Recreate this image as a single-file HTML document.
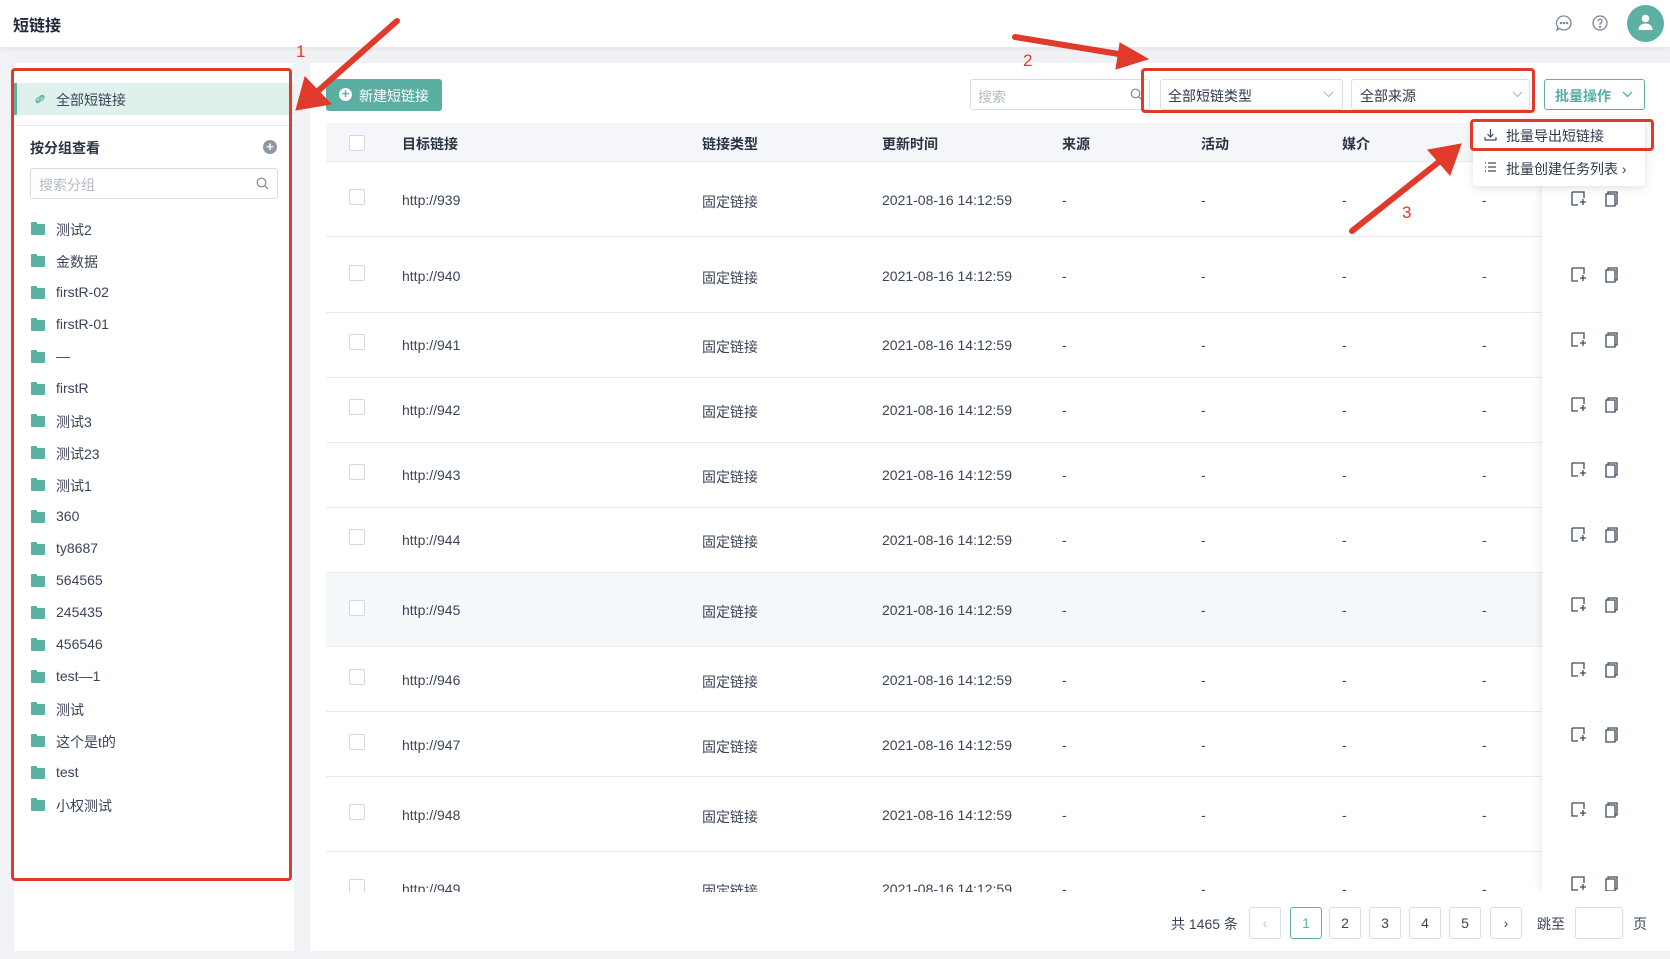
<!DOCTYPE html>
<html><head><meta charset="utf-8">
<style>
*{box-sizing:border-box;margin:0;padding:0}
body{width:1670px;height:959px;background:#f0f2f5;font-family:"Liberation Sans","Noto Sans CJK SC",sans-serif;color:#2e3a4d;font-size:14px;position:relative;overflow:hidden}
.a{position:absolute}
.hdr{left:0;top:0;width:1670px;height:47px;background:#fff;box-shadow:0 2px 6px rgba(0,0,0,.06)}
.fold{position:absolute;left:31px;width:14px;height:11px;background:#5fb0a4;border-radius:1px}
.fold:before{content:"";position:absolute;left:0;top:-2px;width:6px;height:3px;background:#5fb0a4;border-radius:1px 1px 0 0}
.fl{position:absolute;left:56px;font-size:14px;color:#3a4557}
.th{position:absolute;top:134px;font-weight:bold;font-size:14px;color:#2b3444}
.cb{position:absolute;left:349px;width:16px;height:16px;border:1px solid #d3d8df;border-radius:2px;background:#fff}
.cell{position:absolute;font-size:14px;color:#3a4557}
.sep{position:absolute;left:326px;width:1320px;height:1px;background:#e8ebf0}
.pg{position:absolute;top:907px;width:32px;height:32px;border:1px solid #d8dce3;border-radius:3px;text-align:center;line-height:30px;font-size:14px;color:#3a4557;background:#fff}
.red{position:absolute;border:3px solid #e03a2a;border-radius:4px}
</style></head><body>
<div class="a hdr"></div>
<div class="a" style="left:13px;top:12px;font-size:16px;font-weight:bold;color:#1f2838">短链接</div>
<svg class="a" style="left:1555px;top:14px" width="18" height="18" viewBox="0 0 18 18" fill="none" stroke="#7d8796" stroke-width="1.3"><path d="M9 2a7 7 0 1 1-4.5 12.4L2 16l.8-3A7 7 0 0 1 9 2z"/><circle cx="6" cy="9" r=".6" fill="#7d8796"/><circle cx="9" cy="9" r=".6" fill="#7d8796"/><circle cx="12" cy="9" r=".6" fill="#7d8796"/></svg>
<svg class="a" style="left:1591px;top:14px" width="18" height="18" viewBox="0 0 18 18" fill="none" stroke="#7d8796" stroke-width="1.3"><circle cx="9" cy="9" r="7"/><path d="M7 7.2a2 2 0 1 1 2.5 1.9c-.4.2-.5.5-.5 1v.6"/><circle cx="9" cy="12.8" r=".5" fill="#7d8796"/></svg>
<div class="a" style="left:1627px;top:5px;width:37px;height:37px;border-radius:50%;background:#5fb0a4"></div>
<svg class="a" style="left:1637px;top:13px" width="17" height="18" viewBox="0 0 17 18" fill="#fff"><circle cx="8.5" cy="5.5" r="3.8"/><path d="M1.5 17c0-4 3-6.5 7-6.5s7 2.5 7 6.5z"/></svg>

<!-- left panel -->
<div class="a" style="left:14px;top:63px;width:280px;height:888px;background:#fff"></div>
<div class="a" style="left:14px;top:83px;width:280px;height:32px;background:#e0f1ed;border-left:3px solid #5fb0a4"></div>
<svg class="a" style="left:34px;top:93px" width="12" height="12" viewBox="0 0 12 12" fill="none" stroke="#5fb0a4" stroke-width="1.2"><path d="M3 9l6-6M4.5 4.5l-2 2a1.8 1.8 0 0 0 2.6 2.6l2-2M7.5 7.5l2-2a1.8 1.8 0 0 0-2.6-2.6l-2 2"/></svg>
<div class="a" style="left:56px;top:90px;font-size:14px;color:#3a4557">全部短链接</div>
<div class="a" style="left:14px;top:125px;width:280px;height:1px;background:#e8ebf0"></div>
<div class="a" style="left:30px;top:138px;font-size:14px;font-weight:bold;color:#2b3444">按分组查看</div>
<div class="a" style="left:263px;top:140px;width:14px;height:14px;border-radius:50%;background:#8e97a4;color:#fff;font-size:13px;line-height:13px;text-align:center;font-weight:bold">+</div>
<div class="a" style="left:30px;top:168px;width:248px;height:31px;border:1px solid #d8dce3;border-radius:3px"></div>
<div class="a" style="left:39px;top:175px;font-size:14px;color:#b4bac4">搜索分组</div>
<svg class="a" style="left:256px;top:177px" width="13" height="13" viewBox="0 0 13 13" fill="none" stroke="#7d8796" stroke-width="1.2"><circle cx="5.5" cy="5.5" r="4.3"/><path d="M8.6 8.6l3.4 3.4"/></svg>

<div class="fold" style="top:224px"></div><div class="fl" style="top:220px">测试2</div>
<div class="fold" style="top:256px"></div><div class="fl" style="top:252px">金数据</div>
<div class="fold" style="top:288px"></div><div class="fl" style="top:284px">firstR-02</div>
<div class="fold" style="top:320px"></div><div class="fl" style="top:316px">firstR-01</div>
<div class="fold" style="top:352px"></div><div class="fl" style="top:348px">—</div>
<div class="fold" style="top:384px"></div><div class="fl" style="top:380px">firstR</div>
<div class="fold" style="top:416px"></div><div class="fl" style="top:412px">测试3</div>
<div class="fold" style="top:448px"></div><div class="fl" style="top:444px">测试23</div>
<div class="fold" style="top:480px"></div><div class="fl" style="top:476px">测试1</div>
<div class="fold" style="top:512px"></div><div class="fl" style="top:508px">360</div>
<div class="fold" style="top:544px"></div><div class="fl" style="top:540px">ty8687</div>
<div class="fold" style="top:576px"></div><div class="fl" style="top:572px">564565</div>
<div class="fold" style="top:608px"></div><div class="fl" style="top:604px">245435</div>
<div class="fold" style="top:640px"></div><div class="fl" style="top:636px">456546</div>
<div class="fold" style="top:672px"></div><div class="fl" style="top:668px">test—1</div>
<div class="fold" style="top:704px"></div><div class="fl" style="top:700px">测试</div>
<div class="fold" style="top:736px"></div><div class="fl" style="top:732px">这个是t的</div>
<div class="fold" style="top:768px"></div><div class="fl" style="top:764px">test</div>
<div class="fold" style="top:800px"></div><div class="fl" style="top:796px">小权测试</div>

<!-- main panel -->
<div class="a" style="left:310px;top:63px;width:1360px;height:888px;background:#fff"></div>
<div class="a" style="left:326px;top:79px;width:116px;height:32px;background:#5aafa2;border-radius:3px"></div>
<div class="a" style="left:339px;top:88px;width:13px;height:13px;border-radius:50%;background:#fff;color:#5aafa2;font-size:13px;line-height:12px;text-align:center;font-weight:bold">+</div>
<div class="a" style="left:359px;top:86px;font-size:14px;color:#fff">新建短链接</div>

<div class="a" style="left:970px;top:79px;width:180px;height:31px;border:1px solid #d8dce3;border-radius:3px"></div>
<div class="a" style="left:978px;top:87px;font-size:14px;color:#b4bac4">搜索</div>
<svg class="a" style="left:1130px;top:88px" width="13" height="13" viewBox="0 0 13 13" fill="none" stroke="#7d8796" stroke-width="1.2"><circle cx="5.5" cy="5.5" r="4.3"/><path d="M8.6 8.6l3.4 3.4"/></svg>
<div class="a" style="left:1160px;top:79px;width:183px;height:31px;border:1px solid #d8dce3;border-radius:3px"></div>
<div class="a" style="left:1168px;top:86px;font-size:14px;color:#2e3a4d">全部短链类型</div>
<svg class="a" style="left:1323px;top:91px" width="11" height="7" viewBox="0 0 11 7" fill="none" stroke="#aab1bc"><path d="M1 1l4.5 4.5L10 1"/></svg>
<div class="a" style="left:1351px;top:79px;width:179px;height:31px;border:1px solid #d8dce3;border-radius:3px"></div>
<div class="a" style="left:1360px;top:86px;font-size:14px;color:#2e3a4d">全部来源</div>
<svg class="a" style="left:1512px;top:91px" width="11" height="7" viewBox="0 0 11 7" fill="none" stroke="#aab1bc"><path d="M1 1l4.5 4.5L10 1"/></svg>
<div class="a" style="left:1544px;top:79px;width:101px;height:31px;border:1px solid #5fb0a4;border-radius:3px"></div>
<div class="a" style="left:1555px;top:86px;font-size:14px;color:#5aafa2;font-weight:bold">批量操作</div>
<svg class="a" style="left:1622px;top:91px" width="11" height="7" viewBox="0 0 11 7" fill="none" stroke="#5aafa2" stroke-width="1.3"><path d="M1 1l4.5 4.5L10 1"/></svg>

<!-- table header -->
<div class="a" style="left:326px;top:123px;width:1320px;height:39px;background:#f4f6f9;border-bottom:1px solid #e8ebf0"></div>
<div class="cb" style="top:135px"></div>
<div class="th" style="left:402px">目标链接</div>
<div class="th" style="left:702px">链接类型</div>
<div class="th" style="left:882px">更新时间</div>
<div class="th" style="left:1062px">来源</div>
<div class="th" style="left:1201px">活动</div>
<div class="th" style="left:1342px">媒介</div>

<!-- rows -->
<div class="a" style="left:326px;top:573px;width:1320px;height:73px;background:#f5f8fb"></div>
<div class="sep" style="top:236px"></div><div class="sep" style="top:312px"></div><div class="sep" style="top:377px"></div><div class="sep" style="top:442px"></div><div class="sep" style="top:507px"></div><div class="sep" style="top:572px"></div><div class="sep" style="top:646px"></div><div class="sep" style="top:711px"></div><div class="sep" style="top:776px"></div><div class="sep" style="top:851px"></div>

<div style="position:absolute;left:0;top:0;width:1670px;height:892px;overflow:hidden">
<div class="cb" style="top:189px"></div><div class="cell" style="left:402px;top:192px">http://939</div><div class="cell" style="left:702px;top:192px">固定链接</div><div class="cell" style="left:882px;top:192px">2021-08-16 14:12:59</div><div class="cell" style="left:1062px;top:192px">-</div><div class="cell" style="left:1201px;top:192px">-</div><div class="cell" style="left:1342px;top:192px">-</div><div class="cell" style="left:1482px;top:192px">-</div>
<div class="cb" style="top:265px"></div><div class="cell" style="left:402px;top:268px">http://940</div><div class="cell" style="left:702px;top:268px">固定链接</div><div class="cell" style="left:882px;top:268px">2021-08-16 14:12:59</div><div class="cell" style="left:1062px;top:268px">-</div><div class="cell" style="left:1201px;top:268px">-</div><div class="cell" style="left:1342px;top:268px">-</div><div class="cell" style="left:1482px;top:268px">-</div>
<div class="cb" style="top:334px"></div><div class="cell" style="left:402px;top:337px">http://941</div><div class="cell" style="left:702px;top:337px">固定链接</div><div class="cell" style="left:882px;top:337px">2021-08-16 14:12:59</div><div class="cell" style="left:1062px;top:337px">-</div><div class="cell" style="left:1201px;top:337px">-</div><div class="cell" style="left:1342px;top:337px">-</div><div class="cell" style="left:1482px;top:337px">-</div>
<div class="cb" style="top:399px"></div><div class="cell" style="left:402px;top:402px">http://942</div><div class="cell" style="left:702px;top:402px">固定链接</div><div class="cell" style="left:882px;top:402px">2021-08-16 14:12:59</div><div class="cell" style="left:1062px;top:402px">-</div><div class="cell" style="left:1201px;top:402px">-</div><div class="cell" style="left:1342px;top:402px">-</div><div class="cell" style="left:1482px;top:402px">-</div>
<div class="cb" style="top:464px"></div><div class="cell" style="left:402px;top:467px">http://943</div><div class="cell" style="left:702px;top:467px">固定链接</div><div class="cell" style="left:882px;top:467px">2021-08-16 14:12:59</div><div class="cell" style="left:1062px;top:467px">-</div><div class="cell" style="left:1201px;top:467px">-</div><div class="cell" style="left:1342px;top:467px">-</div><div class="cell" style="left:1482px;top:467px">-</div>
<div class="cb" style="top:529px"></div><div class="cell" style="left:402px;top:532px">http://944</div><div class="cell" style="left:702px;top:532px">固定链接</div><div class="cell" style="left:882px;top:532px">2021-08-16 14:12:59</div><div class="cell" style="left:1062px;top:532px">-</div><div class="cell" style="left:1201px;top:532px">-</div><div class="cell" style="left:1342px;top:532px">-</div><div class="cell" style="left:1482px;top:532px">-</div>
<div class="cb" style="top:600px"></div><div class="cell" style="left:402px;top:602px">http://945</div><div class="cell" style="left:702px;top:602px">固定链接</div><div class="cell" style="left:882px;top:602px">2021-08-16 14:12:59</div><div class="cell" style="left:1062px;top:602px">-</div><div class="cell" style="left:1201px;top:602px">-</div><div class="cell" style="left:1342px;top:602px">-</div><div class="cell" style="left:1482px;top:602px">-</div>
<div class="cb" style="top:669px"></div><div class="cell" style="left:402px;top:672px">http://946</div><div class="cell" style="left:702px;top:672px">固定链接</div><div class="cell" style="left:882px;top:672px">2021-08-16 14:12:59</div><div class="cell" style="left:1062px;top:672px">-</div><div class="cell" style="left:1201px;top:672px">-</div><div class="cell" style="left:1342px;top:672px">-</div><div class="cell" style="left:1482px;top:672px">-</div>
<div class="cb" style="top:734px"></div><div class="cell" style="left:402px;top:737px">http://947</div><div class="cell" style="left:702px;top:737px">固定链接</div><div class="cell" style="left:882px;top:737px">2021-08-16 14:12:59</div><div class="cell" style="left:1062px;top:737px">-</div><div class="cell" style="left:1201px;top:737px">-</div><div class="cell" style="left:1342px;top:737px">-</div><div class="cell" style="left:1482px;top:737px">-</div>
<div class="cb" style="top:804px"></div><div class="cell" style="left:402px;top:807px">http://948</div><div class="cell" style="left:702px;top:807px">固定链接</div><div class="cell" style="left:882px;top:807px">2021-08-16 14:12:59</div><div class="cell" style="left:1062px;top:807px">-</div><div class="cell" style="left:1201px;top:807px">-</div><div class="cell" style="left:1342px;top:807px">-</div><div class="cell" style="left:1482px;top:807px">-</div>
<div class="cb" style="top:879px"></div><div class="cell" style="left:402px;top:881px">http://949</div><div class="cell" style="left:702px;top:881px">固定链接</div><div class="cell" style="left:882px;top:881px">2021-08-16 14:12:59</div><div class="cell" style="left:1062px;top:881px">-</div><div class="cell" style="left:1201px;top:881px">-</div><div class="cell" style="left:1342px;top:881px">-</div><div class="cell" style="left:1482px;top:881px">-</div>

<div class="a" style="left:1542px;top:162px;width:104px;height:730px;background:#fff;box-shadow:-4px 0 6px rgba(0,0,0,.05)"></div>
<svg class="a" style="left:1570px;top:191px" width="60" height="700" viewBox="0 0 60 700" fill="none" stroke="#3f4a5c" stroke-width="1.3">
<defs><g id="i"><path d="M2 1h12v6M2 1v13h6M10 11h6M13 8v6"/><path d="M36 3h9v12h-9zM38 3V1h9v12h-2"/></g></defs>
<use href="#i" y="0"/><use href="#i" y="76"/><use href="#i" y="141"/><use href="#i" y="206"/><use href="#i" y="271"/><use href="#i" y="336"/><use href="#i" y="406"/><use href="#i" y="471"/><use href="#i" y="536"/><use href="#i" y="611"/><use href="#i" y="685"/>
</svg>
</div>

<!-- dropdown -->
<div class="a" style="left:1473px;top:120px;width:172px;height:66px;background:#fff;border-radius:4px;box-shadow:0 2px 10px rgba(0,0,0,.12)"></div>
<svg class="a" style="left:1484px;top:128px" width="13" height="13" viewBox="0 0 13 13" fill="none" stroke="#3f4a5c" stroke-width="1.2"><path d="M6.5 1v8M3.5 6l3 3 3-3M1 9v3h11V9"/></svg>
<div class="a" style="left:1506px;top:126px;font-size:14px;color:#2e3a4d">批量导出短链接</div>
<svg class="a" style="left:1484px;top:161px" width="13" height="12" viewBox="0 0 13 12" fill="none" stroke="#3f4a5c" stroke-width="1.2"><path d="M1 2h1M1 6h1M1 10h1M4 2h8M4 6h8M4 10h8"/></svg>
<div class="a" style="left:1506px;top:159px;font-size:14px;color:#2e3a4d">批量创建任务列表 ›</div>

<!-- pagination -->
<div class="a" style="left:1171px;top:914px;font-size:14px;color:#3a4557">共 1465 条</div>
<div class="pg" style="left:1249px;color:#c0c5cd">‹</div>
<div class="pg" style="left:1290px;border-color:#5fb0a4;color:#5fb0a4">1</div>
<div class="pg" style="left:1329px">2</div>
<div class="pg" style="left:1369px">3</div>
<div class="pg" style="left:1409px">4</div>
<div class="pg" style="left:1449px">5</div>
<div class="pg" style="left:1490px">›</div>
<div class="a" style="left:1537px;top:914px;font-size:14px;color:#3a4557">跳至</div>
<div class="a" style="left:1575px;top:907px;width:48px;height:32px;border:1px solid #d8dce3;border-radius:3px;background:#fff"></div>
<div class="a" style="left:1633px;top:914px;font-size:14px;color:#3a4557">页</div>

<!-- annotations -->
<div class="red" style="left:11px;top:68px;width:281px;height:813px"></div>
<div class="red" style="left:1141px;top:68px;width:394px;height:45px"></div>
<div class="red" style="left:1470px;top:119px;width:184px;height:32px"></div>
<svg class="a" style="left:0;top:0" width="1670" height="959">
<g fill="#e03a2a" stroke="#e03a2a" stroke-linecap="round">
<line x1="397" y1="21" x2="318" y2="91" stroke-width="6"/>
<polygon points="296,110 305,77 331,104"/>
<line x1="1015" y1="37" x2="1125" y2="55" stroke-width="6"/>
<polygon points="1148,59 1120,43 1116,69"/>
<line x1="1352" y1="231" x2="1440" y2="161" stroke-width="6"/>
<polygon points="1461,144 1428,150 1450,175"/>
</g>
<g fill="#e03a2a" font-family="Liberation Sans" font-size="17">
<text x="296" y="57">1</text><text x="1023" y="66">2</text><text x="1402" y="218">3</text>
</g>
</svg>
</body></html>
